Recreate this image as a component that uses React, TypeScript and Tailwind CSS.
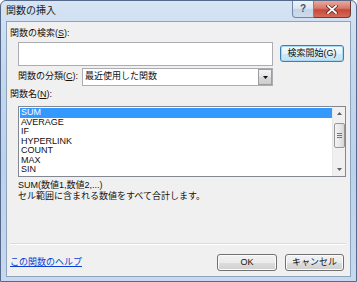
const jp = { fontFamily: '"Liberation Sans", "Noto Sans CJK JP", sans-serif' };

const funcs = ["SUM", "AVERAGE", "IF", "HYPERLINK", "COUNT", "MAX", "SIN"];

const WinButton = ({ label, w, focused = false }: { label: string; w: string; focused?: boolean }) => (
  <div
    className={`${w} h-[17px] rounded-[3px] border flex items-center justify-center text-[9px] leading-none text-[#111] ${
      focused
        ? "border-[#3c7fb1] bg-[linear-gradient(180deg,#f4fafe_0%,#e3f2fb_50%,#cfe8f7_51%,#c4e2f5_100%)] shadow-[inset_0_0_0_1px_#a8d8f2]"
        : "border-[#707070] bg-[linear-gradient(180deg,#f2f2f2_0%,#ebebeb_50%,#dddddd_51%,#cfcfcf_100%)] shadow-[inset_0_0_0_1px_#fcfcfc]"
    }`}
  >
    {label}
  </div>
);

export default function App() {
  return (
    <div
      className="w-[357px] h-[282px] overflow-hidden rounded-t-[6px] border border-[#55698a] flex flex-col bg-[linear-gradient(180deg,#d6e4f4_0%,#c4d8ee_25%,#bcd2ec_60%,#c7d9ef_100%)]"
      style={jp}
    >
      {/* Title bar */}
      <div className="h-[20px] flex items-start justify-between pl-[5px] pr-[5px] shrink-0">
        <div className="text-[10px] leading-none text-[#1b1b1b] pt-[5px]">関数の挿入</div>
        <div className="flex">
          <div className="w-[22px] h-[17px] rounded-bl-[4px] border border-t-0 border-[#6f86a4] bg-[linear-gradient(180deg,#eef3f9_0%,#dbe5f1_45%,#c3d3e6_55%,#cfdcec_100%)] flex items-center justify-center text-[10px] font-bold text-[#3f5572] leading-none">
            ?
          </div>
          <div className="w-[37px] h-[17px] rounded-br-[4px] border border-t-0 border-l-0 border-[#6b3b3a] bg-[linear-gradient(180deg,#e9a99c_0%,#d7796a_45%,#c4493a_55%,#d56b57_100%)] flex items-center justify-center">
            <svg width="12" height="9" viewBox="0 0 12 9">
              <path d="M2 1 L10 8 M10 1 L2 8" stroke="#5a2320" strokeWidth="3.2" strokeLinecap="square" />
              <path d="M2 1 L10 8 M10 1 L2 8" stroke="#ffffff" strokeWidth="1.8" strokeLinecap="square" />
            </svg>
          </div>
        </div>
      </div>

      {/* Client area */}
      <div className="mx-[5px] mb-[4px] flex-1 border border-[#8fa3bd] bg-[#f0f0f0] flex flex-col text-[9px] text-[#111]">
        <div className="pl-[3px] mt-[5px] h-[12px] leading-[12px]">関数の検索(<span className="underline">S</span>):</div>

        <div className="flex items-start mt-[3px]">
          <div className="ml-[11px] w-[255px] h-[24px] bg-white border border-[#abadb3] border-t-[#abadb3]" />
          <div className="ml-[7px] mt-[3px]">
            <WinButton label="検索開始(G)" w="w-[64px]" focused />
          </div>
        </div>

        <div className="flex items-center mt-[2px]">
          <div className="ml-[11px] w-[64px] whitespace-nowrap">
            関数の分類(<span className="underline">C</span>):
          </div>
          <div className="w-[191px] h-[18px] bg-white border border-[#abadb3] flex items-center justify-between">
            <span className="pl-[2px]">最近使用した関数</span>
            <div className="w-[14px] h-[16px] border border-[#9c9c9c] bg-[linear-gradient(180deg,#f4f4f4_0%,#e5e5e5_50%,#d9d9d9_51%,#cdcdcd_100%)] flex items-center justify-center">
              <svg width="5" height="3" viewBox="0 0 5 3">
                <path d="M0 0 H5 L2.5 3 Z" fill="#111" />
              </svg>
            </div>
          </div>
        </div>

        <div className="pl-[3px] mt-[2px] h-[12px] leading-[12px]">関数名(<span className="underline">N</span>):</div>

        <div className="ml-[11px] mr-[4px] mt-[6px] h-[71px] bg-white border border-[#828790] flex">
          <div className="flex-1 pt-[1px] pl-[1px]">
            {funcs.map((f, i) => (
              <div
                key={f}
                className={`h-[9.5px] leading-[9.5px] pl-[1px] text-[9px] ${
                  i === 0 ? "bg-[#3399ff] text-white" : "text-[#111]"
                }`}
              >
                {f}
              </div>
            ))}
          </div>
          <div className="w-[13px] bg-[#f0f0f0] flex flex-col items-center border-l border-[#e6e6e6]">
            <div className="h-[13px] flex items-center justify-center">
              <svg width="5" height="3" viewBox="0 0 5 3">
                <path d="M0 3 H5 L2.5 0 Z" fill="#606060" />
              </svg>
            </div>
            <div className="mt-[3px] w-[11px] h-[25px] rounded-[2px] border border-[#979797] bg-[linear-gradient(90deg,#f3f3f3_0%,#e8e8e8_50%,#d6d6d6_100%)] flex flex-col items-center justify-center gap-[1px]">
              <div className="w-[5px] h-px bg-[#777]" />
              <div className="w-[5px] h-px bg-[#777]" />
              <div className="w-[5px] h-px bg-[#777]" />
            </div>
            <div className="flex-1" />
            <div className="h-[13px] flex items-center justify-center">
              <svg width="5" height="3" viewBox="0 0 5 3">
                <path d="M0 0 H5 L2.5 3 Z" fill="#606060" />
              </svg>
            </div>
          </div>
        </div>

        <div className="ml-[11px] mt-[3px] leading-[11px]">
          <div>SUM(数値1,数値2,...)</div>
          <div>セル範囲に含まれる数値をすべて合計します。</div>
        </div>

        <div className="ml-[3px] mr-[4px] mt-[41px] border-t border-[#dcdcdc] border-b border-b-white" />

        <div className="flex items-center mt-[9px] pl-[3px] pr-[6px]">
          <a className="text-[#0a3fd6] underline leading-none cursor-pointer">この関数のヘルプ</a>
          <div className="flex-1" />
          <WinButton label="OK" w="w-[60px]" />
          <div className="w-[8px]" />
          <WinButton label="キャンセル" w="w-[59px]" />
        </div>
      </div>
    </div>
  );
}
